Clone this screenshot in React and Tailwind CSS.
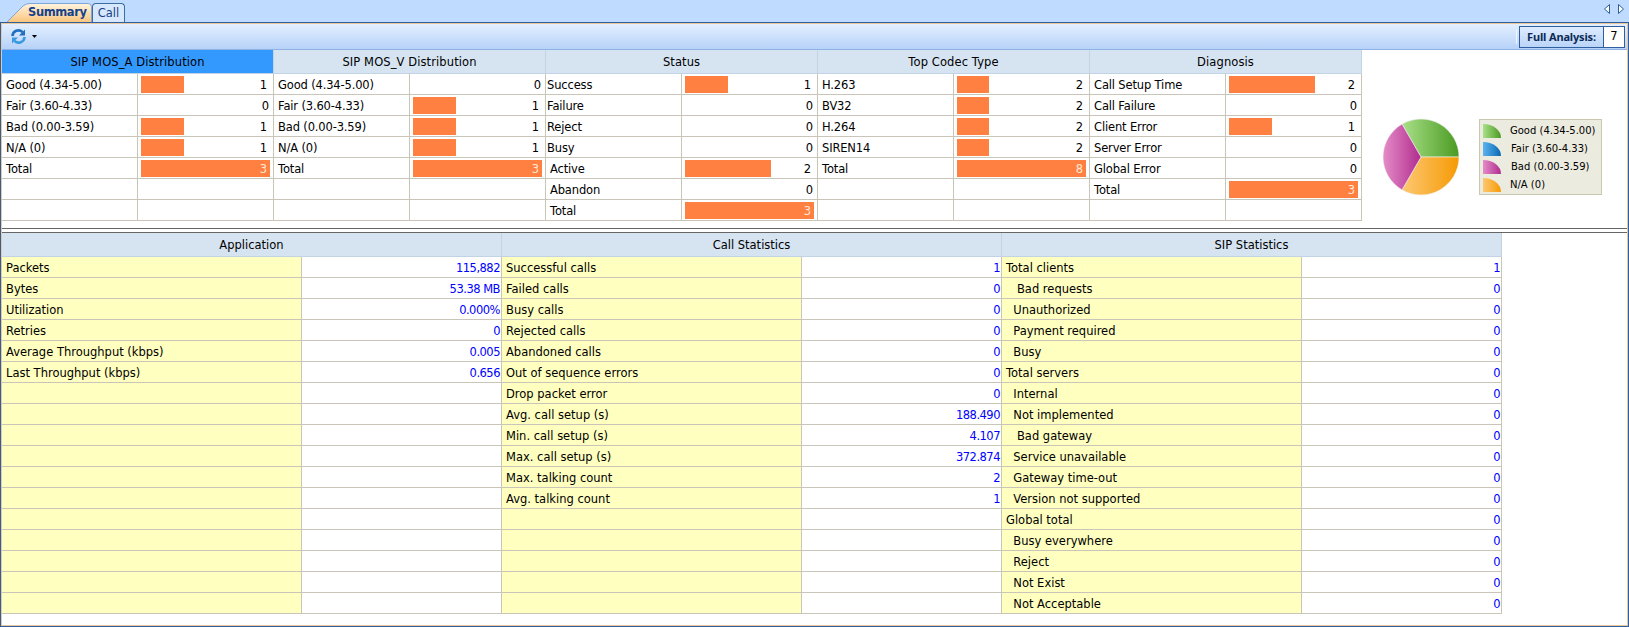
const BORDER = "border-[#c9c5b8]";

function Bar({ w, value, white }) {
  return (
    <div className={`relative h-full flex items-center justify-end pt-[3px] ${w > 0 ? "pr-[6px]" : "pr-[4px]"}`}>
      {w > 0 && <div className="absolute left-[3px] top-[2px] bottom-[1px] bg-[#ff8040]" style={{ width: `${w}px` }} />}
      <span className={`relative ${white ? "text-[#ffe8d8]" : "text-black"}`}>{value}</span>
    </div>
  );
}

function DistRow({ label, indent, w, value, white }) {
  return (
    <div className={`grid grid-cols-[136px_136px] h-[21px] border-b ${BORDER}`}>
      <div className={`border-r ${BORDER} flex items-center pt-[3px] whitespace-nowrap tracking-[-0.15px] ${indent === 1 ? "pl-px" : "pl-[4px]"}`}>{label}</div>
      <div className={`border-r ${BORDER}`}><Bar w={w} value={value} white={white} /></div>
    </div>
  );
}

function DistCol({ title, active, rows }) {
  const blanks = 7 - rows.length;
  return (
    <div className="flex flex-col w-[272px]">
      <div className={`h-[24px] pt-[2px] flex items-center justify-center border-r border-b border-[#c3d3e6] tracking-[0.1px] ${active ? "bg-[#3399ff]" : "bg-[#d6e4f2]"}`}>{title}</div>
      {rows.map((r, i) => <DistRow key={i} {...r} />)}
      {Array.from({ length: blanks }).map((_, i) => <DistRow key={"b" + i} label="" w={0} value="" />)}
    </div>
  );
}

function StatCol({ title, rows }) {
  const blanks = 17 - rows.length;
  const all = [...rows, ...Array.from({ length: blanks }).map(() => ["", ""])];
  return (
    <div className="flex flex-col w-[500px]">
      <div className="h-[24px] pt-[2px] flex items-center justify-center bg-[#d6e4f2] border-r border-b border-[#c3d3e6]">{title}</div>
      {all.map(([l, v], i) => (
        <div key={i} className={`grid grid-cols-[300px_200px] h-[21px] border-b ${BORDER}`}>
          <div className={`bg-[#ffffc0] border-r ${BORDER} flex items-center pt-[3px] pl-[4px] whitespace-pre`}>{l}</div>
          <div className={`flex items-center justify-end pt-[3px] text-[#0000ff] tracking-[-0.5px] pr-px border-r ${BORDER}`}>{v}</div>
        </div>
      ))}
    </div>
  );
}

function Swatch({ id, from, to }) {
  return (
    <svg width="18" height="14" viewBox="0 0 18 14" className="shrink-0">
      <defs>
        <linearGradient id={id} x1="0" x2="1" y1="0" y2="0">
          <stop offset="0" stopColor={from} />
          <stop offset="1" stopColor={to} />
        </linearGradient>
      </defs>
      <path d="M0 0 A18 14 0 0 1 18 14 L0 14 Z" fill={`url(#${id})`} />
    </svg>
  );
}

function Pie() {
  const c = 39;
  const a = (d) => [c + 38 * Math.cos((d * Math.PI) / 180), c + 38 * Math.sin((d * Math.PI) / 180)];
  const slice = (s, e) => {
    const [x1, y1] = a(s);
    const [x2, y2] = a(e);
    return `M${c} ${c} L${x1} ${y1} A38 38 0 0 1 ${x2} ${y2} Z`;
  };
  return (
    <svg width="78" height="78" viewBox="0 0 78 78" className="shrink-0">
      <defs>
        <linearGradient id="pg" x1="0" x2="1" y1="0" y2="0"><stop offset="0" stopColor="#a9e088" /><stop offset="1" stopColor="#4a9a22" /></linearGradient>
        <linearGradient id="po" x1="0" x2="1" y1="0" y2="0"><stop offset="0" stopColor="#fdc872" /><stop offset="1" stopColor="#f69a04" /></linearGradient>
        <linearGradient id="pm" x1="0" x2="1" y1="0" y2="0"><stop offset="0" stopColor="#e58cc8" /><stop offset="1" stopColor="#b02c8e" /></linearGradient>
      </defs>
      <path d={slice(-120, 0)} fill="url(#pg)" stroke="#f4f4f4" strokeWidth="0.6" />
      <path d={slice(0, 120)} fill="url(#po)" stroke="#f4f4f4" strokeWidth="0.6" />
      <path d={slice(120, 240)} fill="url(#pm)" stroke="#f4f4f4" strokeWidth="0.6" />
    </svg>
  );
}

function Legend() {
  const items = [
    ["Good (4.34-5.00)", "#a9e088", "#4a9a22", "ml-[9px]", "s1"],
    ["Fair (3.60-4.33)", "#5cb4f0", "#0868b0", "ml-[10px]", "s2"],
    ["Bad (0.00-3.59)", "#e58cc8", "#b02c8e", "ml-[10px]", "s3"],
    ["N/A (0)", "#fdc872", "#f69a04", "ml-[9px]", "s4"],
  ];
  return (
    <div className="w-[123px] h-[76px] bg-[#ecebdf] border border-[#c9c7ae] pl-[3px] pt-[4px] flex flex-col gap-[4px] text-[10px]">
      {items.map(([t, f, to, m, id]) => (
        <div key={t} className="flex items-center h-[14px]">
          <Swatch id={id} from={f} to={to} />
          <span className={`${m} whitespace-nowrap`}>{t}</span>
        </div>
      ))}
    </div>
  );
}

export default function App() {
  const col1 = [
    { label: "Good (4.34-5.00)", w: 43, value: 1 },
    { label: "Fair (3.60-4.33)", w: 0, value: 0 },
    { label: "Bad (0.00-3.59)", w: 43, value: 1 },
    { label: "N/A (0)", w: 43, value: 1 },
    { label: "Total", w: 129, value: 3, white: true },
  ];
  const col2 = [
    { label: "Good (4.34-5.00)", w: 0, value: 0 },
    { label: "Fair (3.60-4.33)", w: 43, value: 1 },
    { label: "Bad (0.00-3.59)", w: 43, value: 1 },
    { label: "N/A (0)", w: 43, value: 1 },
    { label: "Total", w: 129, value: 3, white: true },
  ];
  const col3 = [
    { label: "Success", indent: 1, w: 43, value: 1 },
    { label: "Failure", indent: 1, w: 0, value: 0 },
    { label: "Reject", indent: 1, w: 0, value: 0 },
    { label: "Busy", indent: 1, w: 0, value: 0 },
    { label: "Active", w: 86, value: 2 },
    { label: "Abandon", w: 0, value: 0 },
    { label: "Total", w: 129, value: 3, white: true },
  ];
  const col4 = [
    { label: "H.263", w: 32, value: 2 },
    { label: "BV32", w: 32, value: 2 },
    { label: "H.264", w: 32, value: 2 },
    { label: "SIREN14", w: 32, value: 2 },
    { label: "Total", w: 129, value: 8, white: true },
  ];
  const col5 = [
    { label: "Call Setup Time", w: 86, value: 2 },
    { label: "Call Failure", w: 0, value: 0 },
    { label: "Client Error", w: 43, value: 1 },
    { label: "Server Error", w: 0, value: 0 },
    { label: "Global Error", w: 0, value: 0 },
    { label: "Total", w: 129, value: 3, white: true },
  ];
  const app = [["Packets", "115,882"], ["Bytes", "53.38 MB"], ["Utilization", "0.000%"], ["Retries", "0"], ["Average Throughput (kbps)", "0.005"], ["Last Throughput (kbps)", "0.656"]];
  const call = [["Successful calls", "1"], ["Failed calls", "0"], ["Busy calls", "0"], ["Rejected calls", "0"], ["Abandoned calls", "0"], ["Out of sequence errors", "0"], ["Drop packet error", "0"], ["Avg. call setup (s)", "188.490"], ["Min. call setup (s)", "4.107"], ["Max. call setup (s)", "372.874"], ["Max. talking count", "2"], ["Avg. talking count", "1"]];
  const sip = [["Total clients", "1"], ["   Bad requests", "0"], ["  Unauthorized", "0"], ["  Payment required", "0"], ["  Busy", "0"], ["Total servers", "0"], ["  Internal", "0"], ["  Not implemented", "0"], ["   Bad gateway", "0"], ["  Service unavailable", "0"], ["  Gateway time-out", "0"], ["  Version not supported", "0"], ["Global total", "0"], ["  Busy everywhere", "0"], ["  Reject", "0"], ["  Not Exist", "0"], ["  Not Acceptable", "0"]];
  return (
    <div className="font-['DejaVu_Sans',sans-serif] w-[1629px] h-[627px] overflow-hidden bg-[#bfdbff] text-[11.5px] leading-none text-black flex flex-col">
      <div className="h-[22px] shrink-0 flex items-end relative">
        <div className="relative w-[92px] h-[22px]">
          <svg width="93" height="22" className="absolute left-0 top-0">
            <defs><linearGradient id="tg" x1="0" x2="0" y1="0" y2="1"><stop offset="0" stopColor="#fff4df" /><stop offset="1" stopColor="#fcc67e" /></linearGradient></defs>
            <path d="M7 22 L23 6 Q26 3.5 30 3.5 L88 3.5 Q91.5 3.5 91.5 7 L91.5 22" fill="url(#tg)" stroke="#7fa6d8" strokeWidth="1" />
          </svg>
          <span className="absolute left-[28px] top-[7px] font-bold tracking-[-0.4px] text-[#15428b]">Summary</span>
        </div>
        <div className="w-[33px] h-[19px] pt-[1px] border border-b-0 border-[#3a6ea5] rounded-t-[4px] bg-[#d8e8fc] flex items-center justify-center text-[#15428b]">Call</div>
        <div className="absolute right-[5px] top-[4px] flex gap-[8px]">
          <svg width="6" height="10" viewBox="0 0 6 10"><path d="M5.5 .5 L.5 5 L5.5 9.5 Z" fill="#fff" stroke="#2d5f9f" /></svg>
          <svg width="6" height="10" viewBox="0 0 6 10"><path d="M.5 .5 L5.5 5 L.5 9.5 Z" fill="#fff" stroke="#2d5f9f" /></svg>
        </div>
      </div>
      <div className="flex-1 min-h-0 border border-[#2f5f9f]">
        <div className="h-full flex flex-col border border-[#e8c79c] bg-white">
          <div className="h-[26px] shrink-0 bg-gradient-to-b from-[#e4efff] to-[#b6d2f8] border-b border-b-[#8db2e3] flex items-center justify-between pl-[9px] pr-[2px]">
            <div className="flex items-center gap-[6px]">
              <svg width="15" height="15" viewBox="0 0 15 15" fill="none">
                <path d="M1.5 7 A5.8 5.8 0 0 1 11.5 3.2" stroke="#1f6fc0" strokeWidth="2.6" />
                <path d="M14 .5 V6.5 H8 Z" fill="#1f6fc0" />
                <path d="M13.5 8 A5.8 5.8 0 0 1 3.5 11.8" stroke="#3a9ae0" strokeWidth="2.6" />
                <path d="M1 14.5 V8.5 H7 Z" fill="#3a9ae0" />
              </svg>
              <svg width="5" height="3" viewBox="0 0 5 3"><path d="M0 0 H5 L2.5 3 Z" fill="#000" /></svg>
            </div>
            <div className="flex items-center gap-[2px]">
              <div className="w-px h-[15px] bg-[#f0f6ff]" />
              <div className="h-[22px] w-[106px] border border-[#2f5f9f] flex items-center font-bold">
                <div className="w-[83px] h-full flex items-center justify-center whitespace-nowrap font-['Noto_Sans',sans-serif] text-[11px] tracking-[-0.15px] text-[#0b2a55]">Full Analysis:</div>
                <div className="flex-1 h-full bg-white border-l border-[#2f5f9f] flex items-center justify-center font-normal">7</div>
              </div>
            </div>
          </div>
          <div className="h-[178px] shrink-0 flex">
            <DistCol title="SIP MOS_A Distribution" active rows={col1} />
            <DistCol title="SIP MOS_V Distribution" rows={col2} />
            <DistCol title="Status" rows={col3} />
            <DistCol title="Top Codec Type" rows={col4} />
            <DistCol title="Diagnosis" rows={col5} />
            <div className="flex-1 flex items-center pl-[20px] pt-[35px]">
              <Pie />
              <div className="ml-[19px]"><Legend /></div>
            </div>
          </div>
          <div className="h-[5px] shrink-0 border-t border-b border-[#666]" />
          <div className="flex-1 min-h-0 flex">
            <StatCol title="Application" rows={app} />
            <StatCol title="Call Statistics" rows={call} />
            <StatCol title="SIP Statistics" rows={sip} />
          </div>
        </div>
      </div>
    </div>
  );
}
